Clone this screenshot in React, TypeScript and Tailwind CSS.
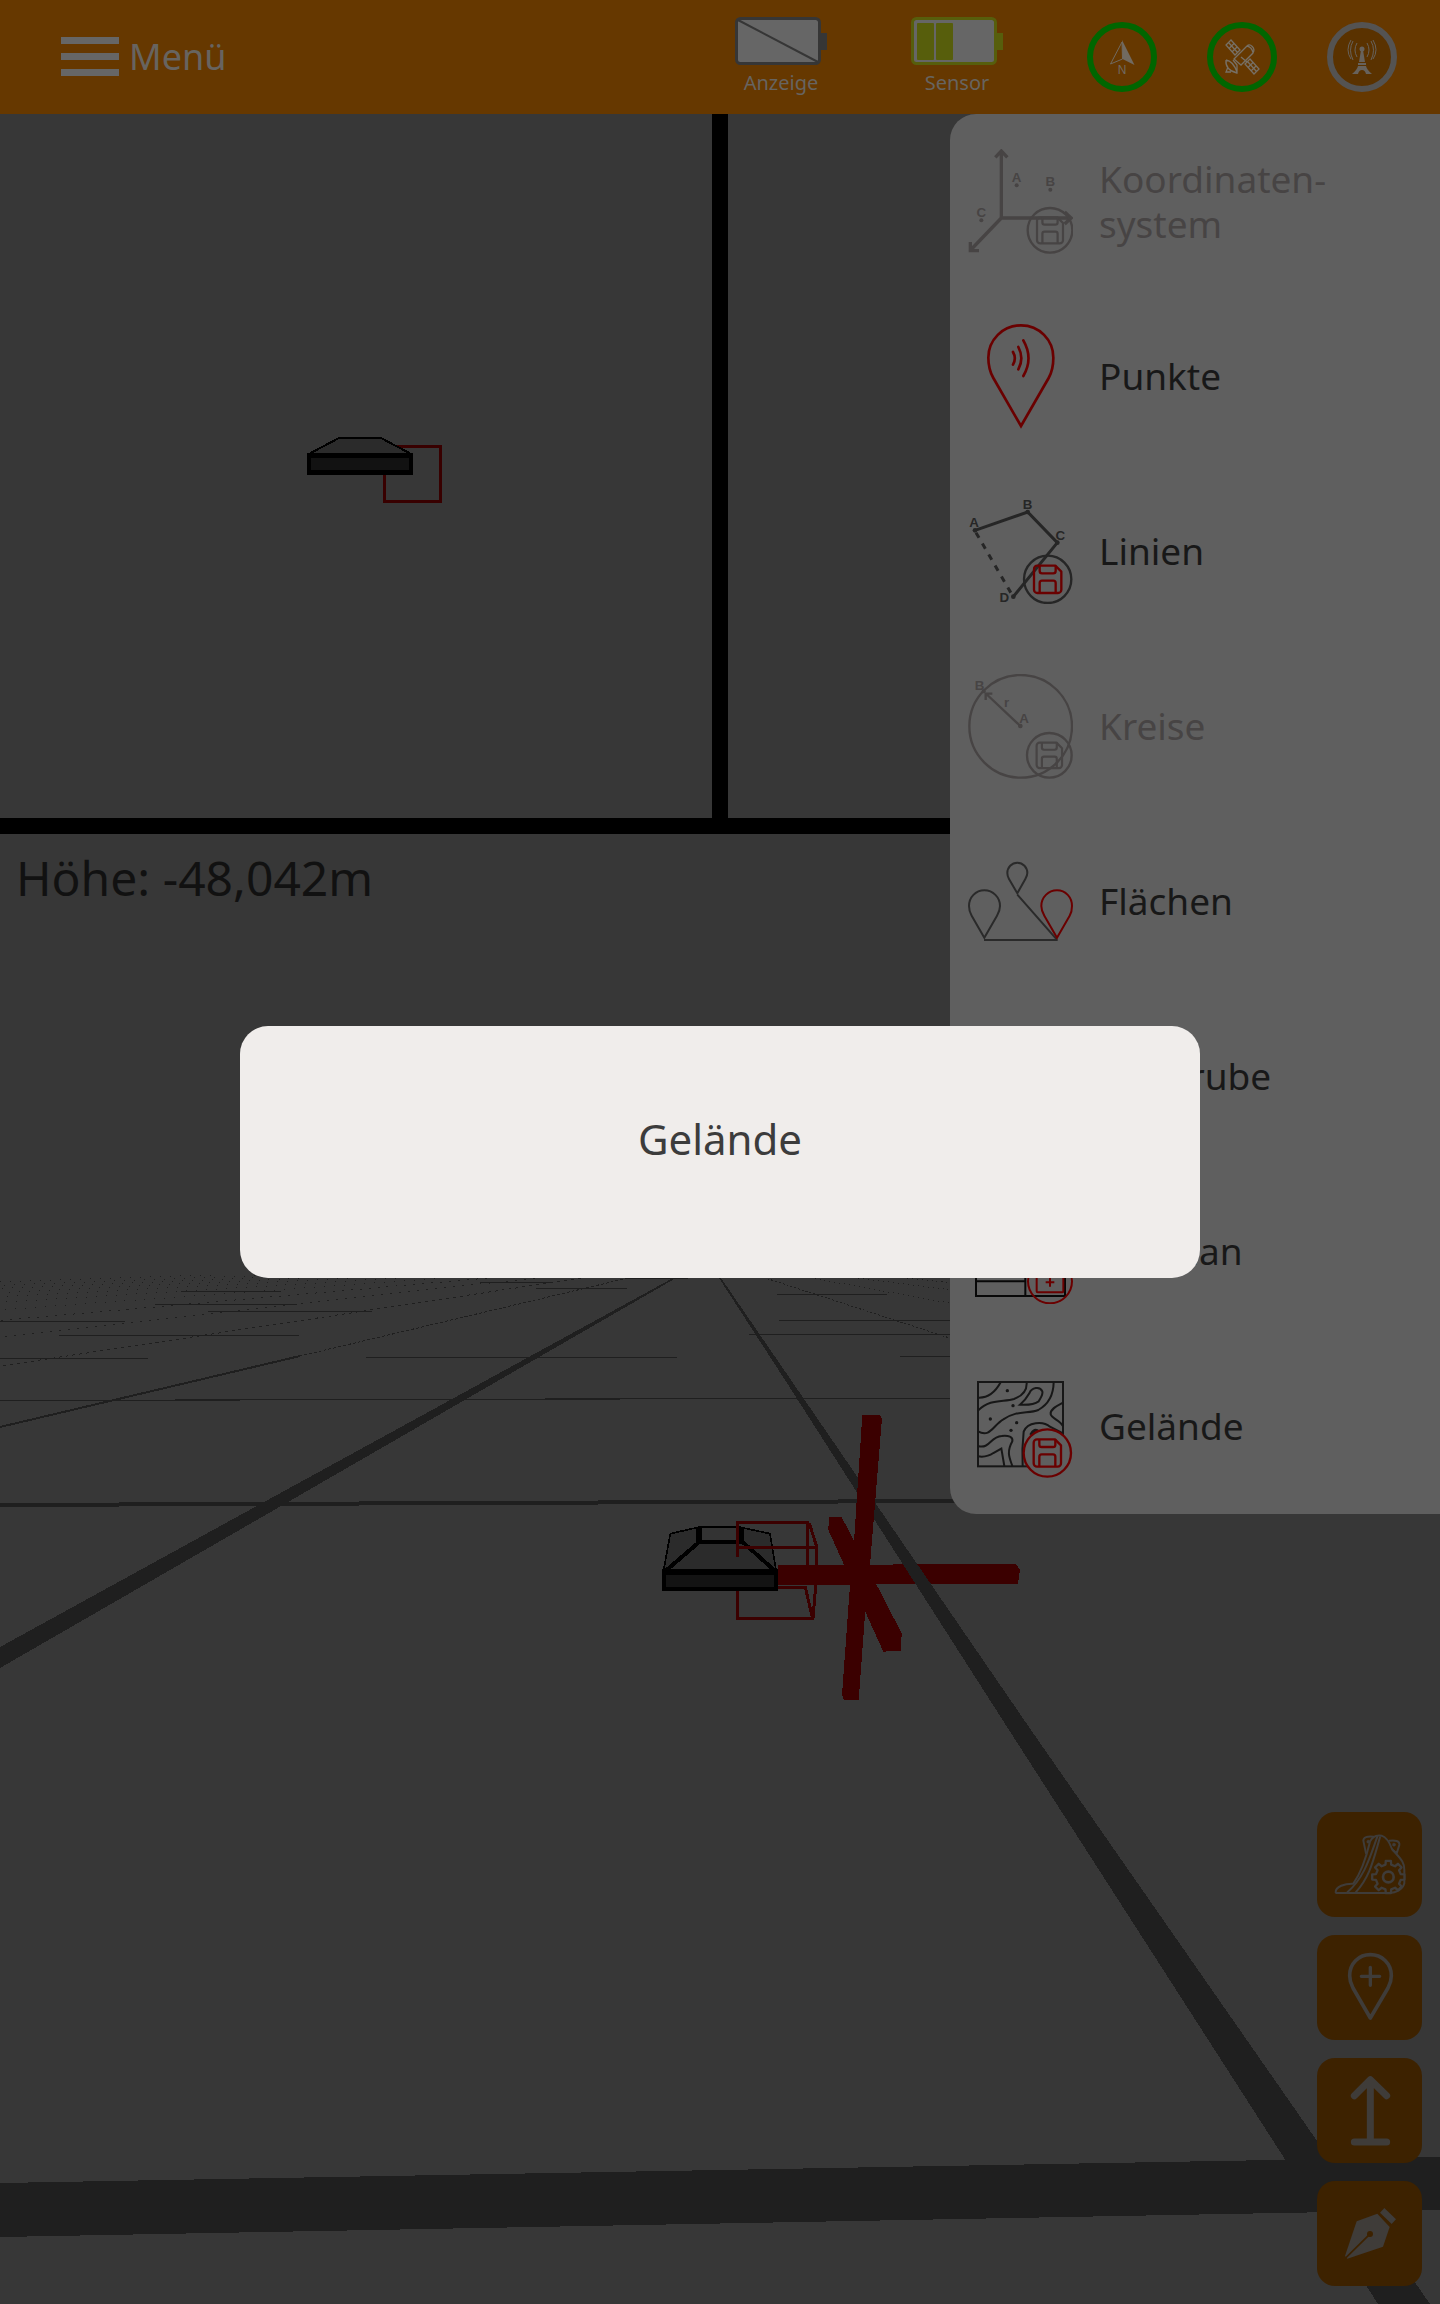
import React from "react";

const INK = "#1b1b1b";
const MUTED = "#474444";
const RED = "#6a0000";
const PANEL = "#5f5f5f";
const TOOL = "#3f3c39";
const GRID = "#1f1f1f";
const AXIS = "#3b0000";

type BadgeProps = { cx: number; cy: number; r: number; ring: string; color: string; scale?: number; fill?: string };

/** Round badge with a floppy disk. */
function SaveBadge({ cx, cy, r, ring, color, scale = 1, fill = "none" }: BadgeProps) {
  return (
    <g transform={`translate(${cx} ${cy})`} fill="none" strokeWidth={7} strokeLinejoin="round">
      <circle r={r} stroke={ring} fill={fill} />
      <g transform={`scale(${scale})`} stroke={color}>
        <path d="M-31-41H23L41-23V31a10 10 0 0 1-10 10H-31a10 10 0 0 1-10-10V-31a10 10 0 0 1 10-10Z" />
        <path d="M-24-41v16a7 7 0 0 0 7 7H17a7 7 0 0 0 7-7v-16" />
        <path d="M-24 41V11a7 7 0 0 1 7-7H17a7 7 0 0 1 7 7v30" />
      </g>
    </g>
  );
}

const letter = { fontFamily: '"Liberation Sans", sans-serif', fontWeight: 700, fontSize: 40, textAnchor: "middle" as const };

function CoordinateIcon() {
  return (
    <svg viewBox="84 117 315 315" className="size-[105px]" aria-hidden="true">
      <g fill="none" stroke={MUTED} strokeWidth={10}>
        <path d="M184 122V324H392M184 324L92 420M166 142L184 123L202 142M374 306L393 324L374 342" />
        <path d="M91 396V422H117" />
      </g>
      <g fill={MUTED} {...letter}>
        <text x="230" y="216">A</text>
        <text x="331" y="228">B</text>
        <text x="124" y="321">C</text>
        <circle cx="230" cy="226" r="6" />
        <circle cx="331" cy="239" r="6" />
        <circle cx="124" cy="331" r="6" />
      </g>
      <SaveBadge cx={330} cy={361} r={67} ring={MUTED} color={MUTED} scale={0.95} />
    </svg>
  );
}

function PointIcon() {
  return (
    <svg viewBox="84 642 315 315" className="size-[105px]" aria-hidden="true" fill="none" stroke={RED} strokeWidth={8} strokeLinecap="round">
      <path d="M243 948L160 804C150 786 145 764 145 743C145 690 188 646 243 646S340 690 340 743C340 764 336 786 326 804Z" />
      <path d="M219 726Q230 745 219 764M235 711Q253 745 235 778M250 691Q281 745 250 798" />
    </svg>
  );
}

function LinesIcon() {
  return (
    <svg viewBox="84 87 315 315" className="size-[105px]" aria-hidden="true">
      <g fill="none" stroke="#262626" strokeWidth={9}>
        <path d="M105 181L263 126L352 218L220 380" />
        <path d="M108 188L216 374" strokeDasharray="18 20" />
      </g>
      <g fill="#262626">
        <circle cx="105" cy="181" r="7" />
        <circle cx="263" cy="126" r="7" />
        <circle cx="352" cy="218" r="7" />
        <circle cx="220" cy="380" r="7" />
        <g {...letter}>
          <text x="102" y="171">A</text>
          <text x="263" y="117">B</text>
          <text x="361" y="210">C</text>
          <text x="193" y="397">D</text>
        </g>
      </g>
      <SaveBadge cx={323} cy={328} r={71} ring="#262626" color={RED} />
    </svg>
  );
}

function CircleIcon() {
  return (
    <svg viewBox="84 612 315 315" className="size-[105px]" aria-hidden="true">
      <g fill="none" stroke={MUTED} strokeWidth={7}>
        <circle cx="242" cy="769" r="154" />
        <path d="M241 768L139 672M137 690V671H157" />
      </g>
      <g fill={MUTED}>
        <circle cx="241" cy="768" r="7" />
        <circle cx="131" cy="664" r="6" />
        <g {...letter}>
          <text x="119" y="660">B</text>
          <text x="200" y="712">r</text>
          <text x="252" y="759">A</text>
        </g>
      </g>
      <SaveBadge cx={328} cy={856} r={67} ring={MUTED} color={MUTED} scale={0.93} />
    </svg>
  );
}

function AreaIcon() {
  return (
    <svg viewBox="84 57 315 315" className="size-[105px]" aria-hidden="true" fill="none" stroke="#2a2a2a" strokeWidth={6}>
      <path d="M133 323L95 257C89 247 87 238 87 228C87 202 107 181 133 181S180 202 180 228C180 238 177 247 171 257Z" />
      <path d="M232 190L207 147C203 140 202 135 202 129C202 112 215 98 232 98S262 112 262 129C262 135 260 140 256 147Z" />
      <path d="M132 330H353M232 194L350 328" />
      <path stroke={RED} d="M351 323L313 257C307 247 304 238 304 228C304 202 325 181 351 181S396 202 396 228C396 238 395 247 389 257Z" />
    </svg>
  );
}

function PitIcon() {
  return (
    <svg viewBox="0 0 105 105" className="size-[105px]" aria-hidden="true" fill="none" stroke={INK} strokeWidth={2}>
      <path d="M5 30H30L42 75H65L77 30H100" />
    </svg>
  );
}

function PlanIcon() {
  return (
    <svg viewBox="84 57 315 315" className="size-[105px]" aria-hidden="true" fill="none" strokeWidth={6}>
      <path stroke="#080808" d="M108 80H375V348H108ZM108 304H256V348M256 304V200" />
      <g stroke={RED}>
        <circle cx="330" cy="304" r="66" />
        <rect x="290" y="268" width="80" height="69" rx="3" />
        <path d="M317 307H343M330 294V320" />
      </g>
    </svg>
  );
}

function TerrainIcon() {
  return (
    <svg viewBox="84 582 315 315" className="size-[105px]" aria-hidden="true">
      <g fill="none" stroke="#171717" strokeWidth={6}>
        <rect x="114" y="606" width="255" height="253" />
        <path d="M114 653Q156 655 182 607" />
        <path d="M114 692C150 655 190 667 222 657Q262 642 260 607" />
        <path d="M114 754C150 775 160 735 190 718C230 690 265 702 295 690Q340 665 341 607" />
        <path d="M240 674Q257 660 268 640C275 622 300 618 307 634C310 645 300 656 296 664Q280 676 240 674Z" />
        <path d="M369 668C345 680 330 690 332 703C335 715 360 722 368 737" />
        <path d="M114 798C150 808 150 770 185 768C205 766 220 770 217 784C200 815 207 830 217 858" />
        <path d="M114 829Q140 833 160 819L184 806L193 858" />
        <path d="M248 858C246 820 247 790 251 755C262 725 310 722 330 740L369 760" />
        <path d="M272 765Q284 742 296 756" strokeWidth={9} />
      </g>
      <g fill="#171717">
        <circle cx="202" cy="632" r="5" />
        <circle cx="219" cy="677" r="5" />
        <circle cx="151" cy="717" r="5" />
        <circle cx="230" cy="728" r="5" />
        <circle cx="213" cy="751" r="5" />
      </g>
      <SaveBadge cx={322} cy={819} r={71} ring={RED} color={RED} fill={PANEL} />
    </svg>
  );
}

const entries: { label: React.ReactNode; icon: React.ReactNode; disabled?: boolean }[] = [
  { label: <>Koordinaten-<br />system</>, icon: <CoordinateIcon />, disabled: true },
  { label: "Punkte", icon: <PointIcon /> },
  { label: "Linien", icon: <LinesIcon /> },
  { label: "Kreise", icon: <CircleIcon />, disabled: true },
  { label: "Flächen", icon: <AreaIcon /> },
  { label: "Baugrube", icon: <PitIcon /> },
  { label: "Bauplan", icon: <PlanIcon /> },
  { label: "Gelände", icon: <TerrainIcon /> },
];

function TypePanel() {
  return (
    <nav className="absolute right-0 top-[114px] w-[490px] rounded-l-[26px] bg-[#5f5f5f]">
      {entries.map((e, i) => (
        <button
          key={i}
          disabled={e.disabled}
          className={`flex h-[175px] w-full items-center gap-[26px] pl-[18px] text-left text-[37px] leading-[45px] ${e.disabled ? "text-[#474444]" : "text-[#181818]"}`}
        >
          {e.icon}
          <span className="pb-0.5">{e.label}</span>
        </button>
      ))}
    </nav>
  );
}

function Battery({ label, line, empty }: { label: string; line: string; empty?: boolean }) {
  return (
    <div className="flex flex-col items-center">
      <svg viewBox="0 0 92 48" className="h-12 w-[92px]" aria-hidden="true">
        <rect x="85" y="16" width="7" height="17" fill={line} />
        <rect x="1.5" y="1.5" width="83" height="45" rx="4" fill="#666" stroke={line} strokeWidth="3" />
        {empty ? (
          <path d="M3 3L83 45" stroke={line} strokeWidth="2" />
        ) : (
          <g fill={line}>
            <rect x="6" y="6" width="17" height="37" rx="1" />
            <rect x="25" y="6" width="17" height="37" rx="1" />
          </g>
        )}
      </svg>
      <span className="mt-1 text-[20px] leading-7">{label}</span>
    </div>
  );
}

function StatusRing({ label, ring, fill = "none", children }: { label: string; ring: string; fill?: string; children: React.ReactNode }) {
  return (
    <button aria-label={label}>
      <svg viewBox="0 0 70 70" className="size-[70px]" fill="none">
        <circle cx="35" cy="35" r="32" fill={fill} stroke={ring} strokeWidth="6" />
        {children}
      </svg>
    </button>
  );
}

function Header() {
  return (
    <header className="flex h-[114px] items-center justify-between bg-[#663800] pl-[61px] pr-[43px] text-[#676460]">
      <button className="flex items-center gap-2.5 text-[36px] leading-[45px]">
        <svg viewBox="0 0 58 40" className="h-10 w-[58px]" fill="#666" aria-hidden="true">
          <rect width="58" height="7" />
          <rect y="16" width="58" height="7" />
          <rect y="32" width="58" height="7" />
        </svg>
        <span className="pb-0.5">Menü</span>
      </button>
      <div className="flex items-center gap-[84px]">
        <Battery label="Anzeige" line="#363636" empty />
        <Battery label="Sensor" line="#575e0c" />
        <div className="flex items-center gap-[50px]">
          <StatusRing label="Norden" ring="#006600">
            <path d="M35 20L23.5 42L35.5 37Z" stroke="#716a60" />
            <path d="M35 18L47.5 43L35.5 37Z" fill="#716a60" />
            <text x="35" y="52" textAnchor="middle" fontSize="12" fontFamily='"Liberation Sans", sans-serif' fill="#716a60">N</text>
          </StatusRing>
          <StatusRing label="Satellit" ring="#006600">
            <g stroke="#777065" strokeWidth="1.3">
              <path d="M24 18L19 23L28 33L33 28ZM21.5 20.5L30.5 30.5M27 21.5L22 26.5M30 25L25 30" />
              <path d="M27 37L40 24C43 21 49 26 46 31L34 43ZM40 24Q45 25 46 31" />
              <path d="M43 37L38 42L47 52L52 47ZM40.5 39.5L49.5 49.5M46 40.5L41 45.5M49 44L44 49" />
              <path d="M19 38Q18 48 30 51V43L26 38M21 45L19 50H24M19 38Q26 39 30 50M34 35L40 40" />
            </g>
          </StatusRing>
          <StatusRing label="Basisstation" ring="#545352" fill="#5a3200">
            <g stroke="#67625c" strokeWidth="1">
              <path d="M30 21Q26 28 30 35M26 19Q21 28 26 38M40 21Q44 28 40 35M44 19Q49 28 44 38M24 18Q18 28 24 37M46 18Q52 28 46 37" />
            </g>
            <g fill="#67625c">
              <circle cx="35" cy="27" r="2.5" />
              <path d="M34 28H36L38 40H32ZM31 41H39V43H31ZM31 44H39Q40 48 45 52H39Q38 48 35 48T31 52H25Q30 48 31 44Z" />
            </g>
          </StatusRing>
        </div>
      </div>
    </header>
  );
}

function TopView() {
  return (
    <svg viewBox="0 114 712 704" className="h-full w-full" aria-hidden="true" shapeRendering="crispEdges">
      <path d="M384.5 446.5H440.5V501.5H384.5Z" fill="none" stroke="#380000" strokeWidth="3" />
      <path d="M307 455L339 438H381L413 455Z" fill="#2b2b2b" stroke="#000" strokeWidth="2" />
      <path d="M307 453H413V475H307Z" fill="#000" />
      <path d="M311 458H409V470H311Z" fill="#121212" />
    </svg>
  );
}

/** Slopes of the grid lines that converge on the vanishing point (707, 1259). */
const farLines = [6.6, 9.06, 11.5, 13.9, 16.3, 18.7, 21.1, 24, 27, 31];
const rightLines = [3.07, 5.5, 7.9, 10.3, 12.7];

function PerspectiveView() {
  return (
    <svg viewBox="0 834 1440 1470" preserveAspectRatio="xMidYMin slice" className="absolute inset-0 h-full w-full" aria-hidden="true" shapeRendering="crispEdges">
      <g stroke={GRID} strokeWidth="1">
        {farLines.map((k) => (
          <line key={k} x1={707 - k * 16} y1={1275} x2={707 - k * 110} y2={1369} strokeDasharray={k < 7 ? "3 4" : k < 12 ? "2 7" : "1 9"} />
        ))}
        {rightLines.map((k) => (
          <line key={k} x1={707 + k * 16} y1={1275} x2={707 + k * 90} y2={1349} strokeDasharray={k < 4 ? "2 2" : "1 4"} />
        ))}
      </g>
      <g fill="none" stroke={GRID} strokeWidth="2">
        <path d="M628 1278L300 1356" strokeDasharray="3 2" strokeWidth="1" />
        <path d="M300 1356L0 1427" />
        <path d="M0 1400H240M175 1399H620M545 1398H960" strokeWidth="1" />
        <path strokeWidth="1" d="M0 1358.5H148M366 1357.5H677M900 1356.5H960M59 1335.5H299M749 1334.5H960M0 1321.5H125M779 1320.5H960M208 1311.5H372M155 1304.5H297M181 1291.5H281M480 1282.5H553M536 1288.5H627M777 1294.5H887M628 1278.5H688" />
      </g>
      <g fill={GRID}>
        <path d="M673 1278H676L288 1502L0 1668V1647L264 1502Z" />
        <path d="M0 1503L960 1499V1503L0 1507Z" />
        <path d="M0 2183L1440 2157V2210L0 2237Z" />
      </g>
      <g transform="translate(620 1380) scale(0.33333)">
        <path fill={AXIS} d="M473 555L1187 552L1200 568L1194 611L473 615ZM627 411H665L845 760L843 812L790 815L625 450Z" />
      </g>
      <path fill={GRID} d="M719 1278H721L1031 1730L1290 2102L1430 2304H1378L1009 1730L785 1380Z" />
      <g transform="translate(620 1380) scale(0.33333)">
        <path fill={AXIS} d="M727 105H778L786 115L750 555L735 705L716 960H672L666 945L690 615L703 470Z" />
        <g fill="none" stroke={AXIS} strokeWidth="9">
          <path d="M562 428V555M568 430L590 500L587 620L579 716H352V625M473 622H556L577 712" />
        </g>
        <path d="M151 461L235 442H362L450 461L468 570H131Z" fill="#2b2b2b" stroke="#000" strokeWidth="5" />
        <path d="M240 444H362V486H240Z" fill="#333" />
        <g fill="none" stroke="#000" strokeWidth="12">
          <path d="M235 486H370M238 486L140 570M368 486L462 570" />
          <path d="M237 442V488M365 442V490" strokeWidth="17" />
        </g>
        <path d="M126 567H473V633H126Z" fill="#000" />
        <path d="M138 585H462V622H138Z" fill="#131313" />
        <path d="M568 427H352V530M354 504H592" fill="none" stroke={AXIS} strokeWidth="9" />
      </g>
    </svg>
  );
}

function ToolButton({ label, box, children }: { label: string; box: string; children: React.ReactNode }) {
  return (
    <button aria-label={label} className="size-[105px] rounded-[18px] bg-[#3d2200]">
      <svg viewBox={box} className="size-full" fill="none" stroke={TOOL} strokeLinecap="round" strokeLinejoin="round">
        {children}
      </svg>
    </button>
  );
}

/** Cog outline: eight teeth around (295, 291). */
const cog = Array.from({ length: 8 }, (_, i) => {
  const at = (r: number, d: number) => {
    const a = ((i * 45 + d) * Math.PI) / 180;
    return `${295 + r * Math.cos(a)} ${291 + r * Math.sin(a)}`;
  };
  return `${i ? "L" : "M"}${at(38, -13)}L${at(49, -9)}L${at(49, 9)}L${at(38, 13)}`;
}).join("") + "Z";

function Tools() {
  return (
    <div className="absolute bottom-[18px] right-[18px] flex flex-col gap-[18px]">
      <ToolButton label="Geländeeinstellungen" box="81 96 315 315">
        <g strokeWidth="6">
          <path d="M137 337C136 320 165 310 190 311C215 275 228 235 240 185C247 168 262 165 275 167C290 172 298 185 306 207C330 235 344 245 343 270V310C338 330 315 338 300 339H139Z" />
          <path d="M172 337C225 290 240 230 262 170M197 337C240 290 250 240 270 172" />
          <path d="M250 170C232 168 220 172 220 182L228 220M298 182C315 180 330 182 328 195L320 220L308 210" />
        </g>
        <circle cx="235" cy="185" r="5" fill={TOOL} />
        <circle cx="312" cy="194" r="5" fill={TOOL} />
        <path d={cog} strokeWidth="7" fill="#3d2200" />
        <circle cx="295" cy="291" r="16" strokeWidth="8" />
      </ToolButton>
      <ToolButton label="Punkt hinzufügen" box="81 464 315 315">
        <path strokeWidth="11" d="M241 713L189 623C182 610 179 600 179 586C179 549 207 523 241 523S304 549 304 586C304 600 301 610 294 623Z" />
        <path strokeWidth="10" d="M241 561V615M214 588H269" />
      </ToolButton>
      <ToolButton label="Höhe" box="81 832 315 315">
        <path strokeWidth="21" d="M241 898V1084M193 1084H290M193 945L241 897L290 945" />
      </ToolButton>
      <ToolButton label="Zeichnen" box="81 1200 315 315">
        <g fill={TOOL} stroke="none">
          <path d="M165 1425L200 1321L262 1298L299 1338L279 1397L172 1433Z" />
          <path d="M283 1281L318 1315L305 1329L270 1295Z" />
        </g>
        <circle cx="240" cy="1359" r="9" fill="#3d2200" stroke="none" />
        <path d="M168 1430L238 1361" stroke="#3d2200" strokeWidth="5" />
      </ToolButton>
    </div>
  );
}

export default function App() {
  return (
    <div className="relative flex min-h-screen flex-col bg-[#373737] font-['Noto_Sans',sans-serif]">
      <Header />
      <main className="flex flex-1 flex-col">
        <div className="grid h-[720px] grid-cols-2 gap-4 border-b-16 border-black bg-black">
          <div className="bg-[#373737]"><TopView /></div>
          <div className="bg-[#373737]" />
        </div>
        <section className="relative flex-1 overflow-hidden">
          <PerspectiveView />
          <p className="relative pl-4 pt-3 text-[48px] leading-[64px] text-[#111]">Höhe: -48,042m</p>
        </section>
      </main>
      <TypePanel />
      <Tools />
      <div className="absolute inset-0 flex items-center justify-center">
        <div role="dialog" aria-label="Gelände" className="flex h-[252px] w-2/3 items-center justify-center rounded-[28px] bg-[#f0edeb] pb-7 text-[42px] text-[#3c3c3c]">
          Gelände
        </div>
      </div>
    </div>
  );
}
